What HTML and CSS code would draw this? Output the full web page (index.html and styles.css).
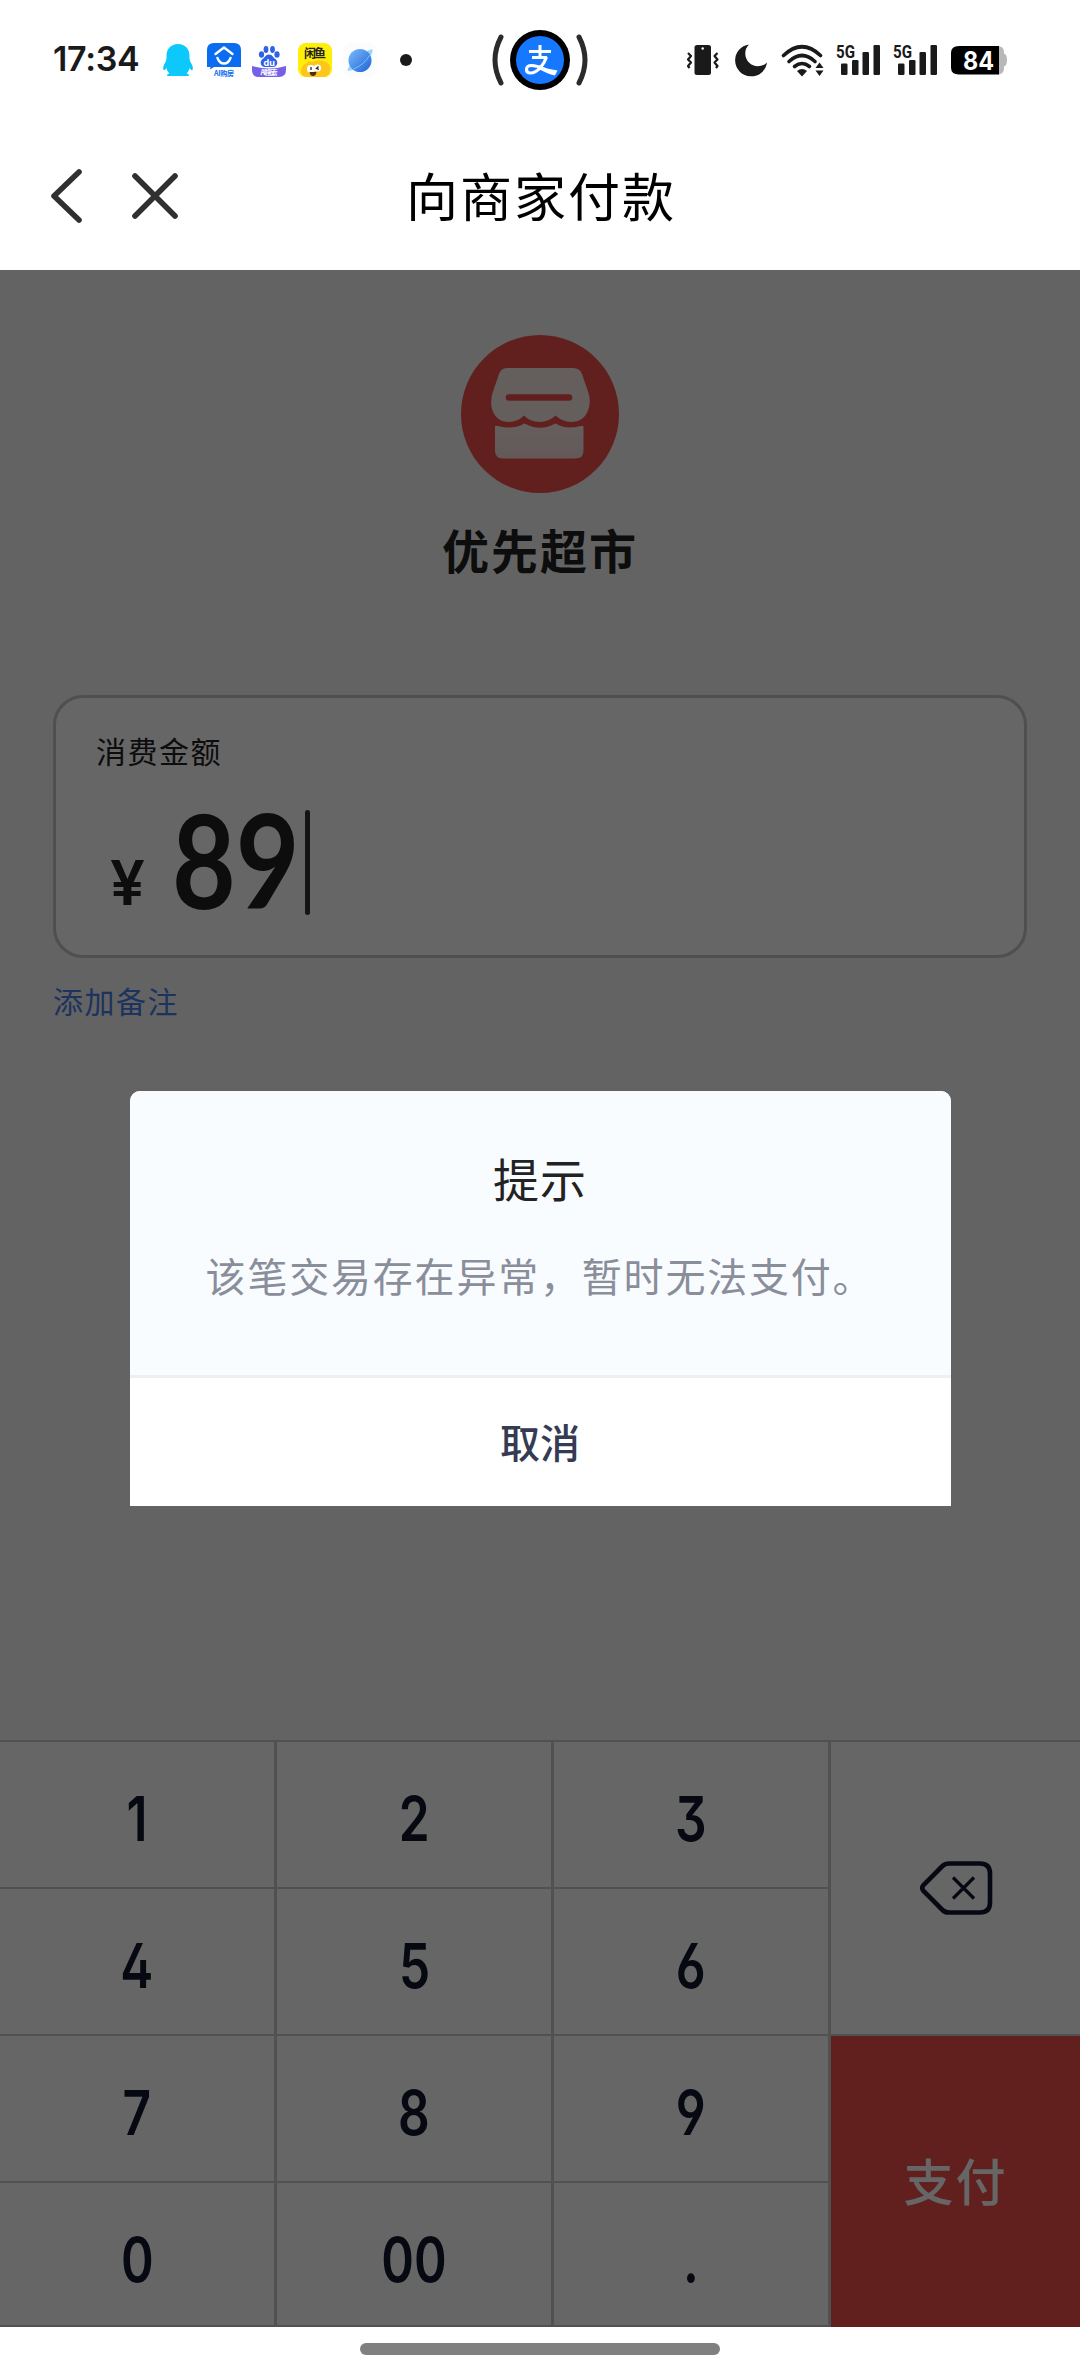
FILE: index.html
```html
<!DOCTYPE html>
<html lang="zh-CN">
  <head>
    <meta charset="UTF-8">
    <meta name="viewport" content="width=device-width, initial-scale=1.0">
    <title>向商家付款</title>
    <link rel="stylesheet" href="styles.css">
  </head>
  <body>
    <div class="status-bar">
      <div class="status-left">
        <span class="time">17:34</span>
        <div class="app-icons">
          <!-- qq -->
          <svg width="34" height="34" viewBox="0 0 34 34">
            <path fill="#0cc8fb" d="M17 1c-7 0-11.500 5-11.500 11.500 0 3 .2 4-1 6.500C2.500 22 1.500 25 2.500 27c1 .6 2.200-.6 3-2 .5 2.500 1.500 4 2.800 5.500-2 .7-2.800 1.500-2 2.500h21.400c.8-1 0-1.800-2-2.500 1.300-1.500 2.300-3 2.800-5.500.8 1.400 2 2.600 3 2 1-2 0-5-2-8-1.200-2.500-1-3.500-1-6.500C28.500 6 24 1 17 1z"/>
          </svg>
          <!-- house search -->
          <svg width="34" height="34" viewBox="0 0 34 34">
            <path fill="#0a6cf0" d="M7 0h20q7 0 7 7v17H7l-4 2.500.5-2.500H0V7q0-7 7-7z"/>
            <path fill="none" stroke="#fff" stroke-width="2.400" stroke-linecap="round" stroke-linejoin="round" d="M8.500 11L17 4.500l8.500 6.500M10.500 15q2 5.500 6.500 5.500t6.500-5.500"/>
            <text class="tiny" x="17" y="32.500" fill="#0a6cf0" textLength="20">AI购房</text>
          </svg>
          <!-- baidu -->
          <svg width="34" height="34" viewBox="0 0 34 34">
            <g fill="#2f62e8">
              <ellipse cx="9.500" cy="11.500" rx="2.600" ry="3.200"/>
              <ellipse cx="14" cy="6.500" rx="2.400" ry="3.400"/>
              <ellipse cx="20.500" cy="6.500" rx="2.400" ry="3.400"/>
              <ellipse cx="25" cy="11.500" rx="2.600" ry="3.200"/>
              <path d="M17 11.500c3.500 0 4 3 6.500 4.500 3.500 3 1.500 8-2.500 8h-8c-4 0-6-5-2.500-8 2.500-1.500 3-4.500 6.500-4.500z"/>
            </g>
            <text class="du" x="17.200" y="22.500" fill="#fff">du</text>
            <path fill="#7560e8" d="M0 23q17 5 34 0v4q0 7-7 7H7q-7 0-7-7z"/>
            <text class="tiny" x="17" y="32" fill="#fff" textLength="17">AI搜索</text>
          </svg>
          <!-- xianyu -->
          <svg width="34" height="34" viewBox="0 0 34 34">
            <rect width="34" height="34" rx="8" fill="#ffee08"/>
            <text class="fish" x="17" y="15" textLength="22">闲鱼</text>
            <path fill="#fcc61b" d="M3 30q-1-7 6-10l1-2 4 1q6-3 12-1 8 3 6 10-1 6-7 6H9q-4 0-6-4z"/>
            <circle cx="13" cy="26" r="4" fill="#fff"/>
            <circle cx="19.500" cy="25" r="3.600" fill="#fff"/>
            <path fill="none" stroke="#222" stroke-width="1.300" d="M13 24v3M20.500 23.500l-2 2 2.500.8"/>
            <path fill="#5a2a10" d="M11.500 29h7q-.5 4-3.500 4t-3.500-4z"/>
          </svg>
          <!-- browser planet -->
          <svg width="34" height="34" viewBox="0 0 34 34">
            <defs>
              <linearGradient id="planet" x1="0" y1="0" x2="1" y2="1">
                <stop offset="0" stop-color="#7cbcfa"/>
                <stop offset="1" stop-color="#1d63d8"/>
              </linearGradient>
            </defs>
            <rect width="34" height="34" rx="8" fill="#fafcfe"/>
            <path fill="#9fd4fb" d="M24 8l5-2q1.500 2-1 6-6 10-18 15l-5 1q-1-2 2-6z"/>
            <circle cx="17" cy="17.500" r="11.500" fill="url(#planet)"/>
            <path fill="none" stroke="#7dbdf8" stroke-width="1" d="M27 12q-6 10-17.500 14.500"/>
          </svg>
          <svg width="34" height="34" viewBox="0 0 34 34">
            <circle cx="17" cy="17" r="6" fill="#1a1a1a"/>
          </svg>
        </div>
      </div>

      <svg class="island" width="96" height="60" viewBox="0 0 96 60">
        <path fill="none" stroke="#2b2b2b" stroke-width="5" stroke-linecap="round" d="M9 7q-12 23 0 46M87 7q12 23 0 46"/>
        <circle cx="48" cy="30" r="30" fill="#000"/>
        <circle cx="48" cy="30" r="24" fill="#1677ff"/>
        <path fill="none" stroke="#fff" stroke-width="3" d="M37 21.500h22M48 15v12M40 27.500h15"/>
        <path fill="none" stroke="#fff" stroke-width="3.200" d="M54.500 27q-2 6-6 10.500-5 5.500-10 5.500-4 0-4-3.500 0-4 5-4 5.500 0 11.500 3.500"/>
        <path fill="#fff" d="M47 35q7 4 18.500 5.500l-2.500 5q-8-1.500-16.500-7z"/>
      </svg>

      <div class="status-right">
        <!-- vibrate -->
        <svg width="34" height="34" viewBox="0 0 34 34">
          <rect x="8.500" y="2" width="16.500" height="30" rx="2.500" fill="#1a1a1a"/>
          <circle cx="16.700" cy="5.500" r="1.200" fill="#fff"/>
          <path fill="none" stroke="#1a1a1a" stroke-width="2.200" stroke-linejoin="round" d="M2 10l3 3-3 3.500 3 3-3 3.500 1.500 2M31.500 10l-3 3 3 3.500-3 3 3 3.500-1.500 2"/>
        </svg>
        <!-- do not disturb -->
        <svg class="moon" width="34" height="34" viewBox="0 0 34 34">
          <path fill="#1a1a1a" d="M15 1.500A16 16 0 1 0 33 19.500 11.500 11.500 0 0 1 15 1.500z"/>
        </svg>
        <!-- wifi -->
        <svg class="wifi" width="44" height="34" viewBox="0 0 44 34">
          <g fill="none" stroke="#1a1a1a" stroke-width="3.600" stroke-linecap="round">
            <path d="M2.500 12.500Q21 -5 39.500 12.500"/>
            <path d="M8 18.500Q21 6.500 34 18.500"/>
            <path d="M13.500 23.500Q21 17.500 28.500 23.500"/>
          </g>
          <path fill="#1a1a1a" d="M16 28q5-4 10 0l-5 5.500zM34.500 25l4-5.500 4 5.500zM34.500 27.500l4 5.500 4-5.500z"/>
        </svg>
        <!-- sim 1 -->
        <svg class="signal" width="46" height="34" viewBox="0 0 46 34">
          <text class="net" x="0" y="14.500" textLength="19" lengthAdjust="spacingAndGlyphs">5G</text>
          <g fill="#1a1a1a">
            <rect x="5" y="20.500" width="6.500" height="11.500" rx="1.200"/>
            <rect x="16" y="17" width="6.500" height="15" rx="1.200"/>
            <rect x="26.500" y="9" width="6.500" height="23" rx="1.200"/>
            <rect x="37.500" y="2" width="6.500" height="30" rx="1.200"/>
          </g>
        </svg>
        <!-- sim 2 -->
        <svg class="signal" width="46" height="34" viewBox="0 0 46 34">
          <text class="net" x="0" y="14.500" textLength="19" lengthAdjust="spacingAndGlyphs">5G</text>
          <g fill="#1a1a1a">
            <rect x="5" y="20.500" width="6.500" height="11.500" rx="1.200"/>
            <rect x="16" y="17" width="6.500" height="15" rx="1.200"/>
            <rect x="26.500" y="9" width="6.500" height="23" rx="1.200"/>
            <rect x="37.500" y="2" width="6.500" height="30" rx="1.200"/>
          </g>
        </svg>
        <!-- battery -->
        <svg width="56" height="34" viewBox="0 0 56 34">
          <path fill="#b8b8b8" d="M46 3q7 0 7 6v1.500q3 1 3 6.500t-3 6.500v2q0 6-7 6z"/>
          <path fill="#000" d="M8 3h40v28.500H8q-8 0-8-7V10q0-7 8-7z"/>
          <text class="battery" x="12" y="26.500" textLength="31" lengthAdjust="spacingAndGlyphs">84</text>
        </svg>
      </div>
    </div>

    <div class="nav-bar">
      <div class="nav-buttons">
        <svg width="34" height="58" viewBox="0 0 34 58">
          <path d="M29 5L4 29l25 24"/>
        </svg>
        <svg width="46" height="46" viewBox="0 0 46 46">
          <path d="M3 3l40 40M43 3L3 43"/>
        </svg>
      </div>
      <h1 class="title">向商家付款</h1>
    </div>

    <div class="page">
      <div class="merchant">
        <svg width="158" height="158" viewBox="0 0 158 158">
          <defs>
            <linearGradient id="shop" x1="0" y1="0" x2="0" y2="1">
              <stop offset="0" stop-color="#ffeceb"/>
              <stop offset="1" stop-color="#f5dedc"/>
            </linearGradient>
          </defs>
          <circle cx="79" cy="79" r="79" fill="#f2504b"/>
          <path fill="#f9eae8" d="M46 33h66q7 0 9 6l6.500 19q2.500 8 0 16-4 13-18 13-8 0-15-6.500-6.500 6.500-16 6.500t-15.500-6.500Q57 87 48 87q-13 0-17-13-2-8 .5-16L38 39q2-6 8-6z"/>
          <path stroke="#f2504b" stroke-width="6.500" stroke-linecap="round" d="M48 62.500h60"/>
          <path fill="url(#shop)" d="M34 92q0-2 3-1 16 4 26.500-2.500Q79 97 94.500 88.500q10.500 6.500 25 2.500 3-1 3 1v23.500q0 8-8 8H42q-8 0-8-8z"/>
        </svg>
        <div class="merchant-name">优先超市</div>
      </div>

      <div class="amount-box">
        <div class="amount-label">消费金额</div>
        <div class="amount">
          <span class="yen">¥</span>
          <span class="value">89</span>
          <span class="cursor"></span>
        </div>
      </div>
      <a class="remark">添加备注</a>

      <div class="keypad">
        <div class="key"><span>1</span></div>
        <div class="key"><span>2</span></div>
        <div class="key"><span>3</span></div>
        <div class="key delete">
          <svg width="74" height="56" viewBox="0 0 74 56">
            <path stroke-width="4.600" d="M30 3.500h31q10 0 10 10v29q0 10-10 10H30q-4 0-6.500-2.500L4.500 31q-2.500-3 0-6L23.500 6Q26 3.500 30 3.500z"/>
            <path stroke-width="3.200" d="M34 17.500l21 21M55 17.500l-21 21"/>
          </svg>
        </div>
        <div class="key"><span>4</span></div>
        <div class="key"><span>5</span></div>
        <div class="key"><span>6</span></div>
        <div class="key"><span>7</span></div>
        <div class="key"><span>8</span></div>
        <div class="key"><span>9</span></div>
        <div class="key pay">支付</div>
        <div class="key"><span>0</span></div>
        <div class="key"><span>00</span></div>
        <div class="key"><span>.</span></div>
      </div>

      <div class="overlay">
        <div class="dialog">
          <div class="dialog-body">
            <div class="dialog-title">提示</div>
            <div class="dialog-text">该笔交易存在异常，暂时无法支付。</div>
          </div>
          <div class="dialog-button">取消</div>
        </div>
      </div>
    </div>

    <div class="home-bar"><div class="home-pill"></div></div>
  </body>
</html>
```
FILE: styles.css
```css
* {
  box-sizing: border-box;
}

body {
  margin: 0;
  width: 1080px;
  height: 2376px;
  display: flex;
  flex-direction: column;
  background-color: #fff;
  font-family: "Noto Sans CJK SC", sans-serif;
  color: #222;
}

svg {
  display: block;
  flex: none;
}

/* status bar */
.status-bar {
  height: 120px;
  padding: 0 70px 0 53px;
  display: grid;
  grid-template-columns: 439px 96px 1fr;
  align-items: center;
}

.status-left,
.status-right,
.app-icons {
  display: flex;
  align-items: center;
}

.time {
  width: 108px;
  font-family: Inter, sans-serif;
  font-size: 34px;
  font-weight: 600;
  line-height: 32px;
  padding-bottom: 2px;
  letter-spacing: -0.3px;
  color: #1a1a1a;
}

.app-icons {
  gap: 11.6px;
}

.status-right {
  padding-left: 98px;
}

.moon {
  margin-left: 14px;
}

.wifi {
  margin-left: 13px;
}

.signal {
  margin-left: 11px;
}

.status-right svg:last-child {
  margin-left: 12px;
}

.tiny,
.du,
.fish {
  font-size: 7px;
  font-weight: 700;
  text-anchor: middle;
}

.du {
  font-family: Inter, sans-serif;
  font-size: 9px;
}

.fish {
  font-size: 12px;
  fill: #222;
}

.net {
  font-family: Roboto, sans-serif;
  font-size: 17.5px;
  font-weight: 700;
  fill: #1a1a1a;
}

.battery {
  font-family: Inter, sans-serif;
  font-size: 26px;
  font-weight: 700;
  fill: #fff;
}

/* nav bar */
.nav-bar {
  height: 150px;
  padding-left: 50px;
  display: grid;
  grid-template-columns: 130px 720px;
  align-items: start;
}

.nav-buttons {
  display: flex;
  align-items: center;
  gap: 48px;
  padding-top: 47px;
  fill: none;
  stroke: #303030;
  stroke-width: 5.6;
  stroke-linecap: round;
  stroke-linejoin: round;
}

.title {
  margin: 0;
  padding-top: 40px;
  padding-left: 2px;
  text-align: center;
  font-size: 52px;
  font-weight: 400;
  line-height: 70px;
  letter-spacing: 2px;
  color: #000;
}

/* page */
.page {
  position: relative;
  height: 2057px;
  display: flex;
  flex-direction: column;
  background-color: #f7f7f7;
}

.merchant {
  padding-top: 65px;
  display: flex;
  flex-direction: column;
  align-items: center;
}

.merchant-name {
  margin-top: 21px;
  font-size: 47px;
  font-weight: 700;
  line-height: 70px;
  letter-spacing: 2px;
}

.amount-box {
  height: 263px;
  margin: 111px 53px 0;
  padding: 32px 40px 0;
  border: 3px solid #c6c6c6;
  border-radius: 30px;
  background-color: #fff;
}

.amount-label {
  font-size: 30px;
  line-height: 40px;
  letter-spacing: 1.5px;
}

.amount {
  display: flex;
  align-items: flex-end;
  height: 145px;
}

.yen {
  width: 76px;
  padding-left: 14px;
  font-family: Inter, sans-serif;
  font-size: 62px;
  font-weight: 600;
  line-height: 64px;
}

.value {
  width: 133px;
  font-family: Lato, sans-serif;
  font-size: 131px;
  font-weight: 700;
  line-height: 112px;
  transform: scaleX(0.84);
  transform-origin: left;
}

.cursor {
  width: 5px;
  height: 105px;
  border-radius: 3px;
  background-color: #333;
}

.remark {
  margin: 22px 53px 0;
  font-size: 30px;
  line-height: 40px;
  letter-spacing: 1.5px;
  color: #4a80ea;
}

/* keypad */
.keypad {
  margin-top: auto;
  display: grid;
  grid-template-columns: 274px 274px 274px 249px;
  grid-template-rows: 145px 145px 145px 142px;
  gap: 2px 3px;
  border-top: 2px solid #cacaca;
  border-bottom: 2px solid #cacaca;
  background-color: #cacaca;
}

.key {
  display: flex;
  justify-content: center;
  background-color: #fff;
  font-family: Inter, sans-serif;
  font-size: 62px;
  font-weight: 600;
  line-height: 154px;
  font-feature-settings: "ss01", "cv09";
  color: #10182c;
}

.key span {
  height: 142px;
  transform: scaleX(0.8);
}

.delete,
.pay {
  grid-column: 4;
  grid-row: span 2;
  align-items: center;
}

.delete svg {
  fill: none;
  stroke: #10182c;
}

.pay {
  margin-bottom: -2px;
  padding-bottom: 6px;
  background-color: #f2504b;
  font-family: "Noto Sans CJK SC", sans-serif;
  font-size: 50px;
  font-weight: 500;
  line-height: 70px;
  letter-spacing: 2px;
  color: #fff;
}

/* dialog */
.overlay {
  position: absolute;
  inset: 0;
  display: flex;
  justify-content: center;
  align-items: center;
  background-color: rgba(0, 0, 0, 0.6);
}

.dialog {
  width: 821px;
  height: 415px;
  display: flex;
  flex-direction: column;
  border-radius: 10px 10px 0 0;
  overflow: hidden;
  background-color: #fff;
  text-align: center;
}

.dialog-body {
  height: 287px;
  padding-top: 53px;
  border-bottom: 3px solid #eeeff1;
  background-color: #f9fcff;
}

.dialog-title {
  font-size: 46px;
  line-height: 66px;
  letter-spacing: 1px;
}

.dialog-text {
  margin-top: 35px;
  font-size: 40px;
  line-height: 60px;
  letter-spacing: 1.8px;
  white-space: nowrap;
  color: #8a8e9b;
}

.dialog-button {
  font-size: 40px;
  font-weight: 500;
  line-height: 126px;
  color: #343b53;
}

/* home indicator */
.home-bar {
  height: 49px;
  padding-top: 16px;
  display: flex;
  justify-content: center;
}

.home-pill {
  width: 360px;
  height: 12px;
  border-radius: 6px;
  background-color: #808080;
}
```
